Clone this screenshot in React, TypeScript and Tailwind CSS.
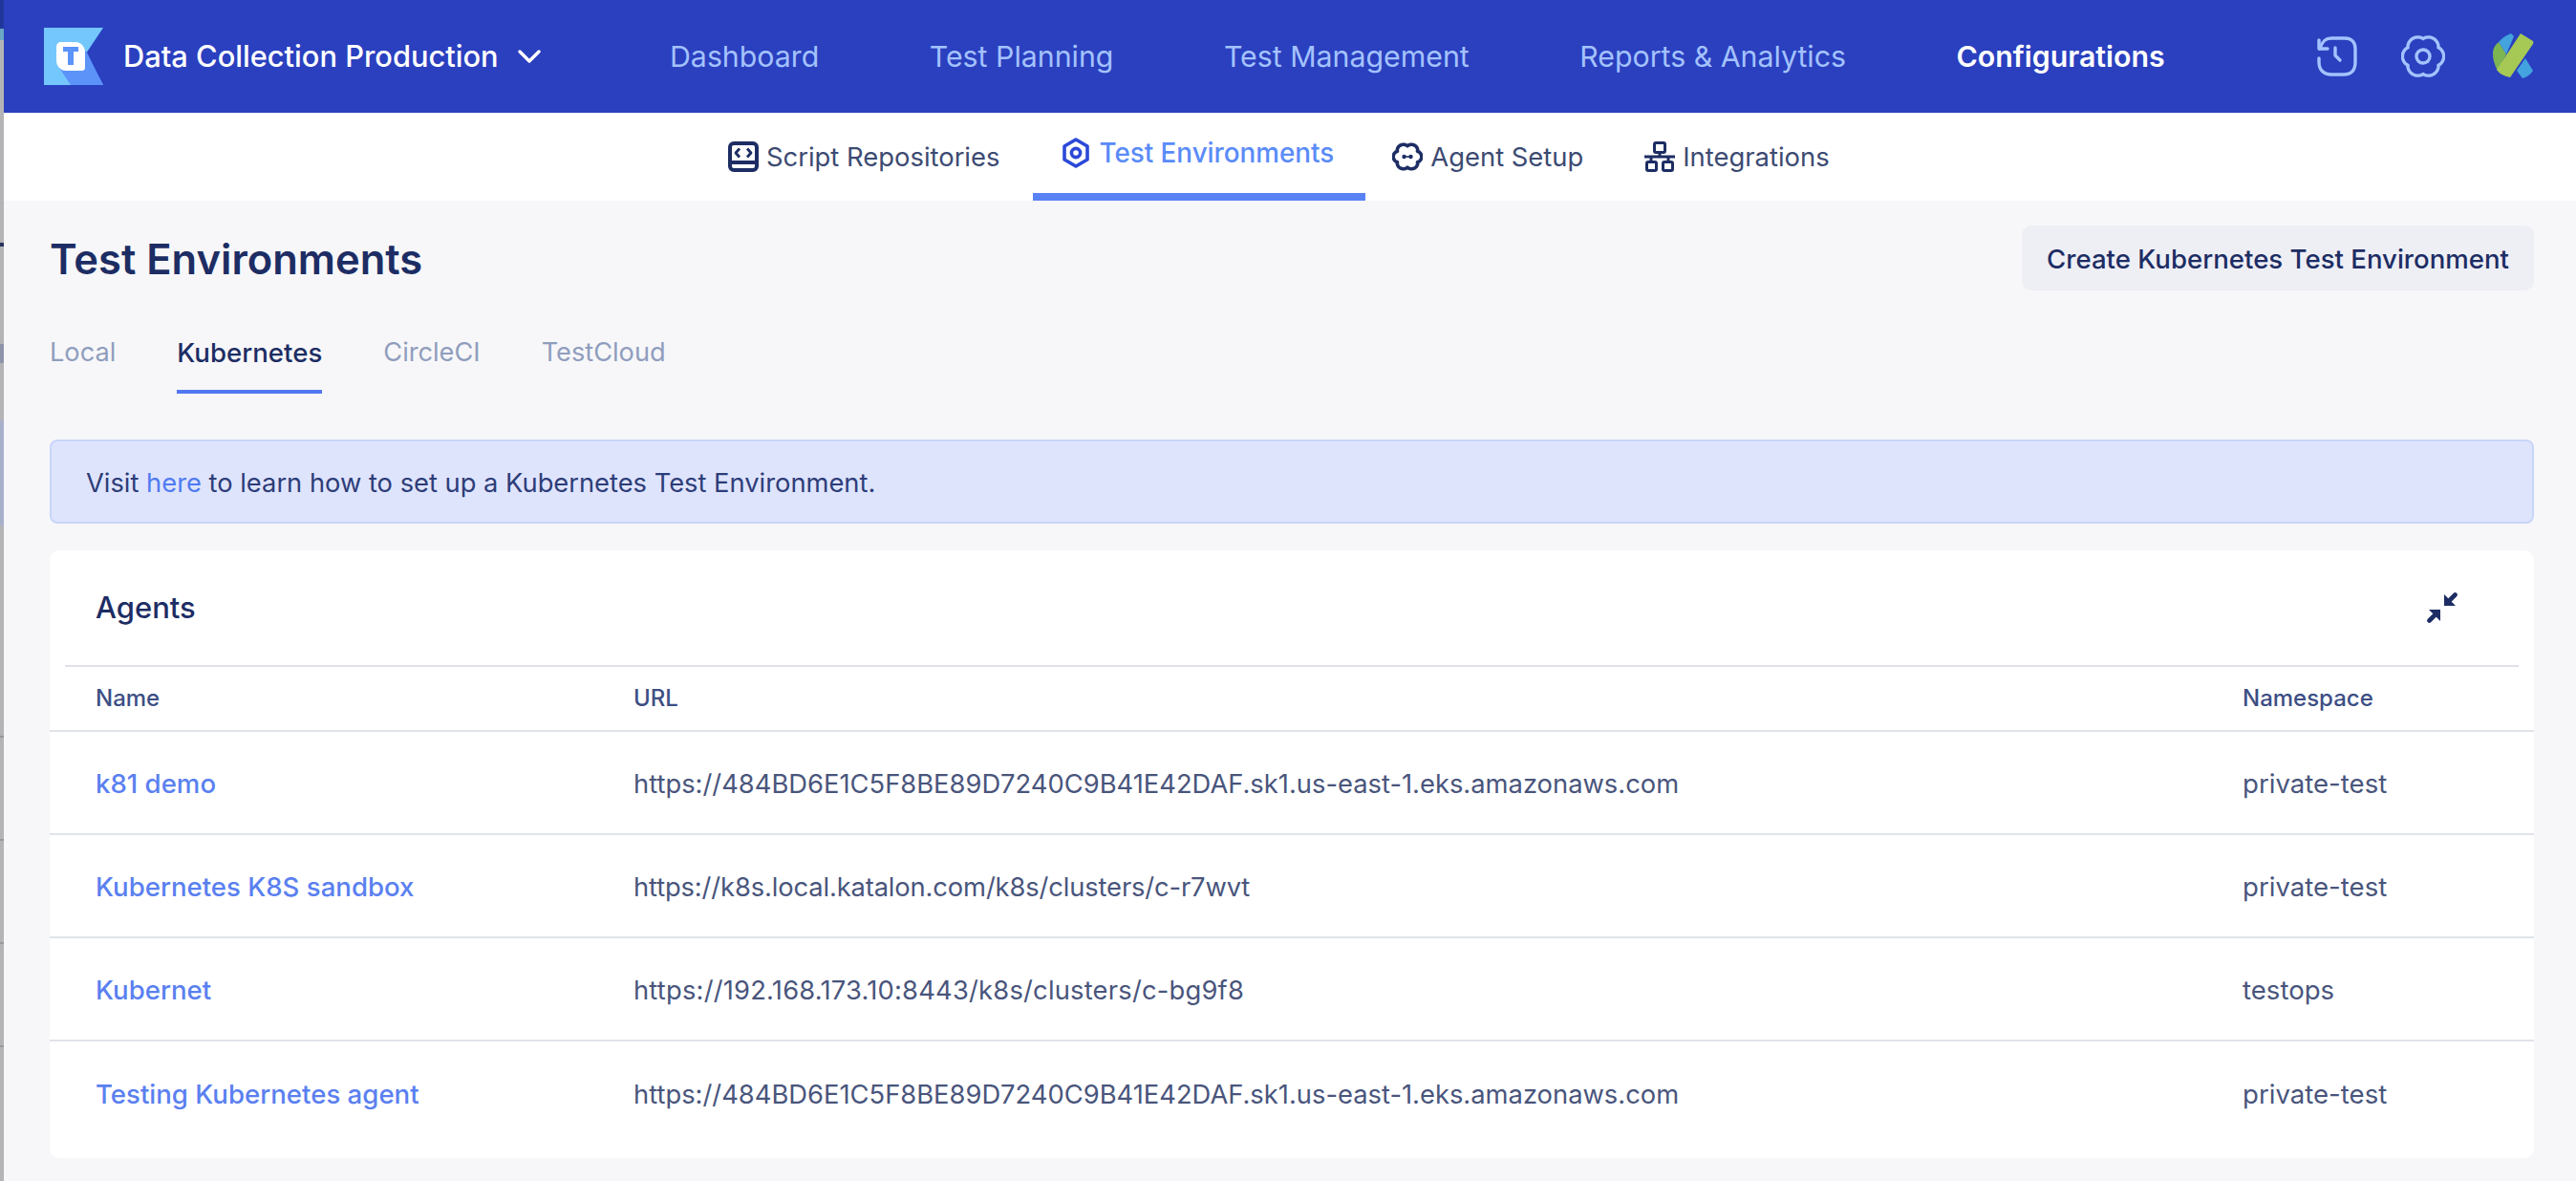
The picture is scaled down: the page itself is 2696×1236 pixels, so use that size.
import React from "react";

const NavItem = ({ label, active }: { label: string; active?: boolean }) => (
  <span className={active ? "text-white font-semibold" : "text-[#a4c2fd]"}>{label}</span>
);

const Logo = () => (
  <svg width="62" height="60" viewBox="0 0 62 60" className="shrink-0">
    <path d="M0 0H62L44 27L62 60H0Z" fill="#74c7fd" />
    <path d="M16 42L44 24L62 60H28Z" fill="#5b93f9" />
    <path d="M18 15H33C39 15 43 20 43 26V41C43 44 42 45 39 45H23C17 45 13 40 13 34V20C13 17 15 15 18 15Z" fill="#fff" />
    <path d="M20 20H36V25H31V39H25V25H20Z" fill="#5b93f9" />
  </svg>
);

const lobed = (cx: number, cy: number, rx: number, ry: number, amp: number) => {
  const pts: string[] = [];
  for (let i = 0; i < 180; i++) {
    const t = (i / 180) * Math.PI * 2;
    const k = 1 + amp * (Math.pow(Math.abs(Math.cos(3 * t)), 0.8) * 2 - 1);
    pts.push(`${(cx + rx * k * Math.cos(t)).toFixed(2)} ${(cy + ry * k * Math.sin(t)).toFixed(2)}`);
  }
  return `M${pts.join("L")}Z`;
};

const HistoryIcon = () => (
  <svg width="42" height="42" viewBox="0 0 42 42" fill="none" stroke="#a4c2fd" strokeWidth="3.4" strokeLinecap="round" strokeLinejoin="round">
    <path d="M3 13C5 6 8 2 15 2H29C36 2 40 6 40 13V27C40 35 36 40 28 40H15C7 40 2 35 2 27V23" />
    <path d="M2 4V13H11" />
    <path d="M19 12V20L24 25" />
  </svg>
);

const GearIcon = () => (
  <svg width="46" height="46" viewBox="0 0 46 46" fill="none" stroke="#a4c2fd" strokeWidth="3.4" strokeLinejoin="round">
    <path d={lobed(23, 23, 20, 20, 0.08)} />
    <circle cx="23" cy="23" r="7" />
  </svg>
);

const Avatar = () => (
  <svg width="44" height="48" viewBox="0 0 44 48" className="shrink-0">
    <path d="M6 9Q11 3 19 0L22 3L14 22Z" fill="#43a3df" />
    <path d="M6 9L14 22L5 39Q0 30 0 21Q0 14 6 9Z" fill="#7db553" />
    <path d="M34 26L42 39Q38 45 31 47L25 39Z" fill="#43a3df" />
    <path d="M29 0L42 8Q43 10 42 11L18 46Q8 44 4 38Z" fill="#a6c955" />
  </svg>
);

const ScriptIcon = () => (
  <svg width="32" height="32" viewBox="0 0 32 32" fill="none" stroke="#1d2d64" strokeWidth="4" strokeLinejoin="round">
    <rect x="2" y="2" width="28" height="28" rx="4" />
    <path d="M2 22H30" />
    <path d="M12 7.5L8 12L12 16.5M20 7.5L24 12L20 16.5" strokeWidth="2.8" />
  </svg>
);

const EnvIcon = () => (
  <svg width="28" height="32" viewBox="0 0 28 32" fill="none" stroke="#2b49d8" strokeWidth="3.6" strokeLinejoin="round">
    <path d="M14 2L26 9V23L14 30L2 23V9Z" />
    <circle cx="14" cy="16" r="4.6" />
  </svg>
);

const AgentIcon = () => (
  <svg width="32" height="30" viewBox="0 0 32 30" fill="none" stroke="#1d2d64" strokeWidth="3.6" strokeLinejoin="round">
    <path d={lobed(16, 15, 13.5, 12.5, 0.1)} />
    <path d="M12 15H20" strokeWidth="1.6" />
    <circle cx="12.5" cy="15" r="2.2" fill="#1d2d64" stroke="none" />
    <circle cx="19.5" cy="15" r="2.2" fill="#1d2d64" stroke="none" />
  </svg>
);

const IntegrationIcon = () => (
  <svg width="32" height="32" viewBox="0 0 32 32" fill="none" stroke="#1d2d64" strokeWidth="3" strokeLinejoin="round">
    <rect x="10.5" y="1.5" width="11" height="10" rx="1.5" />
    <rect x="2.5" y="21.5" width="10" height="9" rx="1.5" />
    <rect x="19.5" y="21.5" width="10" height="9" rx="1.5" />
    <path d="M16 11V16M0 16H32M7 16V22M25 16V22" />
  </svg>
);

const CollapseIcon = () => (
  <svg width="32" height="32" viewBox="0 0 32 32" fill="none" stroke="#1d2d64" strokeWidth="4.6" strokeLinecap="round">
    <path d="M2.5 29.5L9 23" />
    <path d="M2 18H14V30Z" strokeWidth="0" fill="#1d2d64" />
    <path d="M29.5 2.5L23 9" />
    <path d="M30 14H18V2Z" strokeWidth="0" fill="#1d2d64" />
  </svg>
);

const rows = [
  ["k81 demo", "https://484BD6E1C5F8BE89D7240C9B41E42DAF.sk1.us-east-1.eks.amazonaws.com", "private-test", "text-[#49557c]"],
  ["Kubernetes K8S sandbox", "https://k8s.local.katalon.com/k8s/clusters/c-r7wvt", "private-test", "text-[#49557c] tracking-[-0.14px]"],
  ["Kubernet", "https://192.168.173.10:8443/k8s/clusters/c-bg9f8", "testops", "text-[#49557c] tracking-[0.2px]"],
  ["Testing Kubernetes agent", "https://484BD6E1C5F8BE89D7240C9B41E42DAF.sk1.us-east-1.eks.amazonaws.com", "private-test", "text-[#49557c]"],
];

export default function App() {
  return (
    <div className="h-[1236px] w-[2696px] overflow-hidden flex bg-[#f7f7f9] font-['Inter',sans-serif]">
      <div className="w-[4px] shrink-0 flex flex-col bg-[#b4b4b6]">
        <div className="h-[30px] shrink-0 bg-[#22379b]" />
        <div className="h-[12px] shrink-0 bg-[#6ba7c4]" />
        <div className="h-[212px] shrink-0" />
        <div className="h-[4px] shrink-0 bg-[#26335f]" />
        <div className="h-[102px] shrink-0" />
        <div className="h-[20px] shrink-0 bg-[#8f95a8]" />
        <div className="h-[60px] shrink-0" />
        <div className="h-[110px] shrink-0 bg-[#a9b0cc]" />
        <div className="h-[220px] shrink-0" />
        <div className="h-[2px] shrink-0 bg-[#999999]" />
        <div className="h-[106px] shrink-0" />
        <div className="h-[2px] shrink-0 bg-[#999999]" />
        <div className="h-[106px] shrink-0" />
        <div className="h-[2px] shrink-0 bg-[#999999]" />
        <div className="h-[106px] shrink-0" />
        <div className="h-[2px] shrink-0 bg-[#999999]" />
      </div>
      <div className="flex-1 flex flex-col min-w-0">
        <header className="h-[118px] shrink-0 bg-[#2a40bf] flex items-center pl-[42px] pr-[43px] text-[30.3px] leading-[40px]">
          <Logo />
          <span className="ml-[21px] w-[391px] text-[30.8px] text-white font-medium whitespace-nowrap">Data Collection Production</span>
          <svg width="24" height="16" viewBox="0 0 24 16" fill="none" stroke="#fff" strokeWidth="3.4" strokeLinecap="round" strokeLinejoin="round" className="ml-[22px]">
            <path d="M2 3L12 13L22 3" />
          </svg>
          <nav className="ml-[135px] flex gap-[115.5px] whitespace-nowrap">
            <NavItem label="Dashboard" />
            <NavItem label="Test Planning" />
            <NavItem label="Test Management" />
            <NavItem label="Reports &amp; Analytics" />
            <NavItem label="Configurations" active />
          </nav>
          <div className="ml-auto flex items-center">
            <HistoryIcon />
            <div className="ml-[46px]"><GearIcon /></div>
            <div className="ml-[50px]"><Avatar /></div>
          </div>
        </header>

        <div className="h-[92px] shrink-0 bg-white flex pl-[758px] text-[27.4px] text-[#3c4a72] whitespace-nowrap">
          <div className="flex items-center gap-[8px] mr-[35px]">
            <ScriptIcon />
            <span className="pt-[2px]">Script Repositories</span>
          </div>
          <div className="flex items-center gap-[10px] h-[92px] pl-[31px] pr-[33px] border-b-[8px] border-[#5982f4] text-[27.8px] text-[#5a8bf8] font-medium">
            <EnvIcon />
            <span className="pt-[2px]">Test Environments</span>
          </div>
          <div className="flex items-center gap-[8px] ml-[28px]">
            <AgentIcon />
            <span className="pt-[2px]">Agent Setup</span>
          </div>
          <div className="flex items-center gap-[8px] ml-[64px]">
            <IntegrationIcon />
            <span className="pt-[2px]">Integrations</span>
          </div>
        </div>

        <main className="flex-1 pl-[48px] pr-[44px] flex flex-col">
          <div className="flex items-center justify-between mt-[26px] h-[68px]">
            <h1 className="pt-[3px] text-[43.5px] font-semibold text-[#1d2d64]">Test Environments</h1>
            <button className="h-[68px] pt-[3px] px-[26px] rounded-[10px] bg-[#eeeff5] text-[27.6px] font-medium text-[#1d2d64] whitespace-nowrap">
              Create Kubernetes Test Environment
            </button>
          </div>

          <div className="flex gap-[64px] mt-[24px] text-[27.2px] h-[84px]">
            <span className="text-[#8f9dbd] pt-[21px]">Local</span>
            <span className="text-[27.6px] text-[#1d2d64] font-medium pt-[21px] border-b-[4px] border-[#5177f0]">Kubernetes</span>
            <span className="text-[#8f9dbd] pt-[21px]">CircleCI</span>
            <span className="text-[#8f9dbd] pt-[21px]">TestCloud</span>
          </div>

          <div className="mt-[48px] h-[88px] rounded-[8px] border-2 border-[#c8d5f9] bg-[#dfe4fd] flex items-center px-[36px] text-[27.3px] text-[#2d3d78] whitespace-nowrap">
            <span className="pt-[5px]">
              Visit <span className="text-[#4f7bf0]">here</span> to learn how to set up a Kubernetes Test Environment.
            </span>
          </div>

          <section className="mt-[28px] h-[636px] rounded-[10px] bg-white flex flex-col">
            <div className="mx-[16px] h-[122px] shrink-0 flex items-center justify-between pl-[32px] pr-[64px] border-b-2 border-[#e0e0e6]">
              <span className="text-[31px] font-medium text-[#1d2d64]">Agents</span>
              <CollapseIcon />
            </div>
            <div className="grid grid-cols-[563px_1fr_305px] items-center h-[68px] shrink-0 border-b-2 border-[#e0e4e9] pl-[48px] text-[24px] font-medium text-[#3d4e84]">
              <span>Name</span>
              <span>URL</span>
              <span>Namespace</span>
            </div>
            {rows.map((r, i) => (
              <div
                key={r[0]}
                className={
                  i < 3
                    ? "grid grid-cols-[563px_1fr_305px] items-center h-[108px] pt-[3px] shrink-0 border-b-2 border-[#e0e4e9] pl-[48px] text-[27.35px]"
                    : "grid grid-cols-[563px_1fr_305px] items-center h-[108px] pt-[3px] shrink-0 pl-[48px] text-[27.35px]"
                }
              >
                <span className="text-[27.6px] text-[#5a80f0] font-medium">{r[0]}</span>
                <span className={r[3]}>{r[1]}</span>
                <span className="text-[27.6px] text-[#49557c]">{r[2]}</span>
              </div>
            ))}
          </section>
        </main>
      </div>
    </div>
  );
}
